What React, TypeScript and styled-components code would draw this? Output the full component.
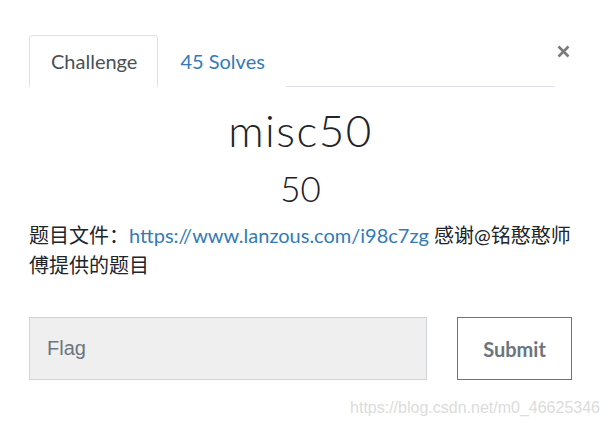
import React, { useState } from 'react';
import styled, { createGlobalStyle } from 'styled-components';

const GlobalStyle = createGlobalStyle`
  html, body {
    margin: 0;
    padding: 0;
    background: #fff;
  }
  body {
    font-family: Lato, "Noto Sans CJK SC", sans-serif;
    color: #212529;
  }
`;

// modal body
const Modal = styled.div`
  position: relative;
  width: 609px;
  height: 425px;
  box-sizing: border-box;
  padding: 35px 37px 0 29px;
  background: #fff;
  overflow: hidden;
`;

const Header = styled.div`
  display: flex;
  align-items: flex-start;
`;

const TabList = styled.ul`
  flex: 1;
  display: flex;
  list-style: none;
  margin: 0 2px 0 0;
  padding: 0;
  border-bottom: 1px solid #dee2e6;
`;

const Tab = styled.li<{ $active?: boolean }>`
  height: 52px;
  box-sizing: border-box;
  display: flex;
  align-items: center;
  padding: 0 20px 0 21px;
  margin-bottom: -1px;
  font-size: 20px;
  color: ${({ $active }) => ($active ? '#495057' : '#337ab7')};
  background: #fff;
  border: 1px solid ${({ $active }) => ($active ? '#dee2e6' : 'transparent')};
  border-bottom-color: ${({ $active }) => ($active ? '#fff' : 'transparent')};
  border-radius: 4px 4px 0 0;
  cursor: pointer;
`;

const CloseButton = styled.button`
  border: none;
  background: none;
  padding: 0;
  margin: 10px 2px 0 0;
  width: 13px;
  height: 13px;
  display: flex;
  cursor: pointer;
`;

const Title = styled.h3`
  margin: 16px 0 0;
  text-align: center;
  font-family: Lato, sans-serif;
  font-weight: 300;
  font-size: 44px;
  line-height: 54px;
  letter-spacing: 1.5px;
  color: #212529;
`;

const Points = styled.h4`
  margin: 10px 0 0;
  text-align: center;
  font-weight: 300;
  font-size: 35px;
  line-height: 42px;
  color: #1d2024;
`;

const Description = styled.p`
  margin: 11px 0 0;
  font-size: 20px;
  line-height: 30px;
  color: #212529;
  font-family: Lato, "Noto Sans CJK SC", sans-serif;
`;

const Link = styled.a`
  color: #337ab7;
  text-decoration: none;
`;

const SubmitRow = styled.form`
  display: flex;
  gap: 30px;
  margin-top: 37px;
`;

const FlagInput = styled.input`
  width: 398px;
  height: 63px;
  box-sizing: border-box;
  padding: 0 17px;
  background: #efefef;
  border: 1px solid #ced4da;
  font-family: "Liberation Sans", Arial, sans-serif;
  font-size: 20px;
  color: #495057;
  outline: none;

  &::placeholder {
    color: #6c757d;
  }
`;

const SubmitButton = styled.button`
  width: 115px;
  height: 63px;
  box-sizing: border-box;
  background: #fff;
  border: 1px solid #6c757d;
  font-family: Lato, sans-serif;
  font-weight: 700;
  font-size: 20px;
  color: #6c757d;
  cursor: pointer;
`;

const Watermark = styled.span`
  position: absolute;
  right: 9px;
  bottom: 8px;
  font-family: "Liberation Sans", Arial, sans-serif;
  font-size: 16px;
  color: #dcdcdc;
`;

const CloseIcon = () => (
  <svg width="13" height="13" viewBox="0 0 13 13">
    <path d="M1.5 1.5 L11.5 11.5 M11.5 1.5 L1.5 11.5" stroke="#7a7a7a" strokeWidth="2.6" strokeLinecap="butt" />
  </svg>
);

const App: React.FC = () => {
  const [tab, setTab] = useState('challenge');
  const [flag, setFlag] = useState('');

  return (
    <>
      <GlobalStyle />
      <Modal>
        <Header>
          <TabList>
            <Tab $active={tab === 'challenge'} onClick={() => setTab('challenge')}>Challenge</Tab>
            <Tab $active={tab === 'solves'} onClick={() => setTab('solves')}>45 Solves</Tab>
          </TabList>
          <CloseButton aria-label="Close">
            <CloseIcon />
          </CloseButton>
        </Header>
        <Title>misc50</Title>
        <Points>50</Points>
        <Description>
          题目文件：<Link href="#">https://www.lanzous.com/i98c7zg</Link> 感谢@铭憨憨师傅提供的题目
        </Description>
        <SubmitRow onSubmit={(e) => e.preventDefault()}>
          <FlagInput placeholder="Flag" value={flag} onChange={(e) => setFlag(e.target.value)} />
          <SubmitButton type="submit">Submit</SubmitButton>
        </SubmitRow>
        <Watermark>https://blog.csdn.net/m0_46625346</Watermark>
      </Modal>
    </>
  );
};

export default App;
